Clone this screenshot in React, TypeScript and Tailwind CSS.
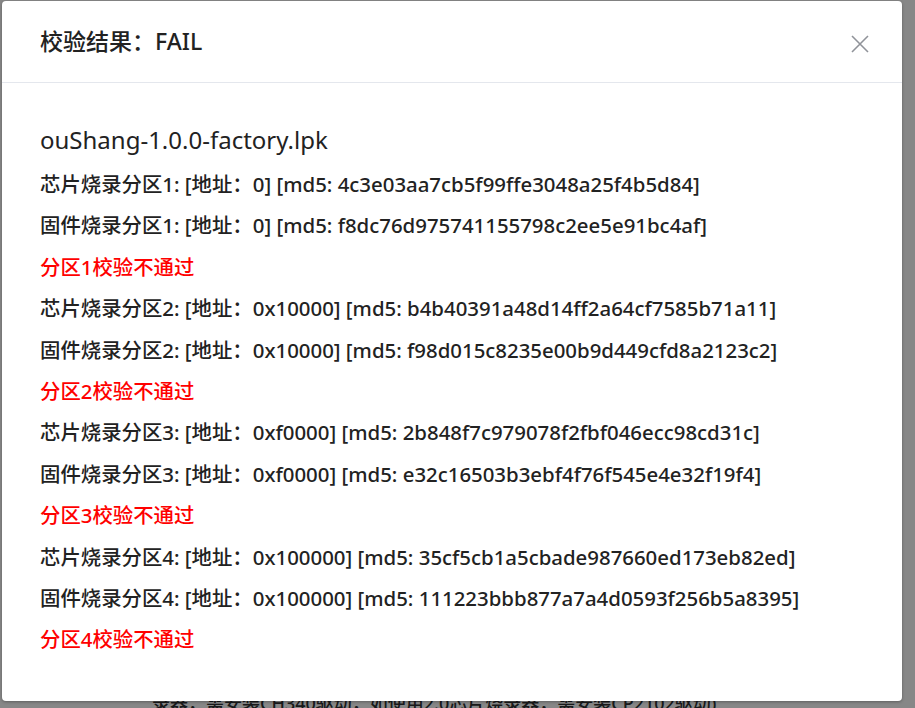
const partitions = [
  {
    id: 1,
    addr: "0",
    chip: "4c3e03aa7cb5f99ffe3048a25f4b5d84",
    firmware: "f8dc76d975741155798c2ee5e91bc4af",
  },
  {
    id: 2,
    addr: "0x10000",
    chip: "b4b40391a48d14ff2a64cf7585b71a11",
    firmware: "f98d015c8235e00b9d449cfd8a2123c2",
  },
  {
    id: 3,
    addr: "0xf0000",
    chip: "2b848f7c979078f2fbf046ecc98cd31c",
    firmware: "e32c16503b3ebf4f76f545e4e32f19f4",
  },
  {
    id: 4,
    addr: "0x100000",
    chip: "35cf5cb1a5cbade987660ed173eb82ed",
    firmware: "111223bbb877a7a4d0593f256b5a8395",
  },
];

const font = "font-['Noto_Sans','Noto_Sans_CJK_SC',sans-serif]";

export default function App() {
  return (
    <div className={`relative w-[915px] h-[708px] overflow-hidden bg-white ${font}`}>
      {/* page behind the dialog */}
      <div className="pt-[690px] pl-[152px] text-[18px] leading-[27px] text-[#303133] font-medium whitespace-nowrap">
        录器，需安装CH340驱动，如使用2.0芯片烧录器，需安装CP2102驱动)
      </div>

      {/* overlay */}
      <div className="absolute inset-0 bg-black/[0.47]" />

      {/* dialog */}
      <div className="absolute left-[2px] top-[1px] w-[900px] h-[700px] bg-white rounded-[4px] shadow-[0_1px_3px_rgba(0,0,0,0.3)]">
        <div className="flex items-center justify-between h-[82px] px-[38px] border-b border-[#e4e7ed]">
          <h2 className="text-[23px] text-[#222] font-medium">校验结果：FAIL</h2>
          <button className="w-[20px] h-[20px] flex items-center justify-center text-[#909399] mt-[4px] -mr-[6px]">
            <svg width="18" height="18" viewBox="0 0 18 18" fill="none" stroke="currentColor" strokeWidth="1.6">
              <path d="M1 1L17 17M17 1L1 17" />
            </svg>
          </button>
        </div>

        <div className="px-[38px] pt-[38px] text-[#222]">
          <div className="text-[24px] leading-[38px] mb-[5px]">ouShang-1.0.0-factory.lpk</div>
          {partitions.map((p) => (
            <div key={p.id} className="text-[20.4px] leading-[41.4px] font-medium">
              <div>
                芯片烧录分区{p.id}: [地址：{p.addr}] [md5: {p.chip}]
              </div>
              <div>
                固件烧录分区{p.id}: [地址：{p.addr}] [md5: {p.firmware}]
              </div>
              <div className="text-[#ff0000]">分区{p.id}校验不通过</div>
            </div>
          ))}
        </div>
      </div>
    </div>
  );
}
